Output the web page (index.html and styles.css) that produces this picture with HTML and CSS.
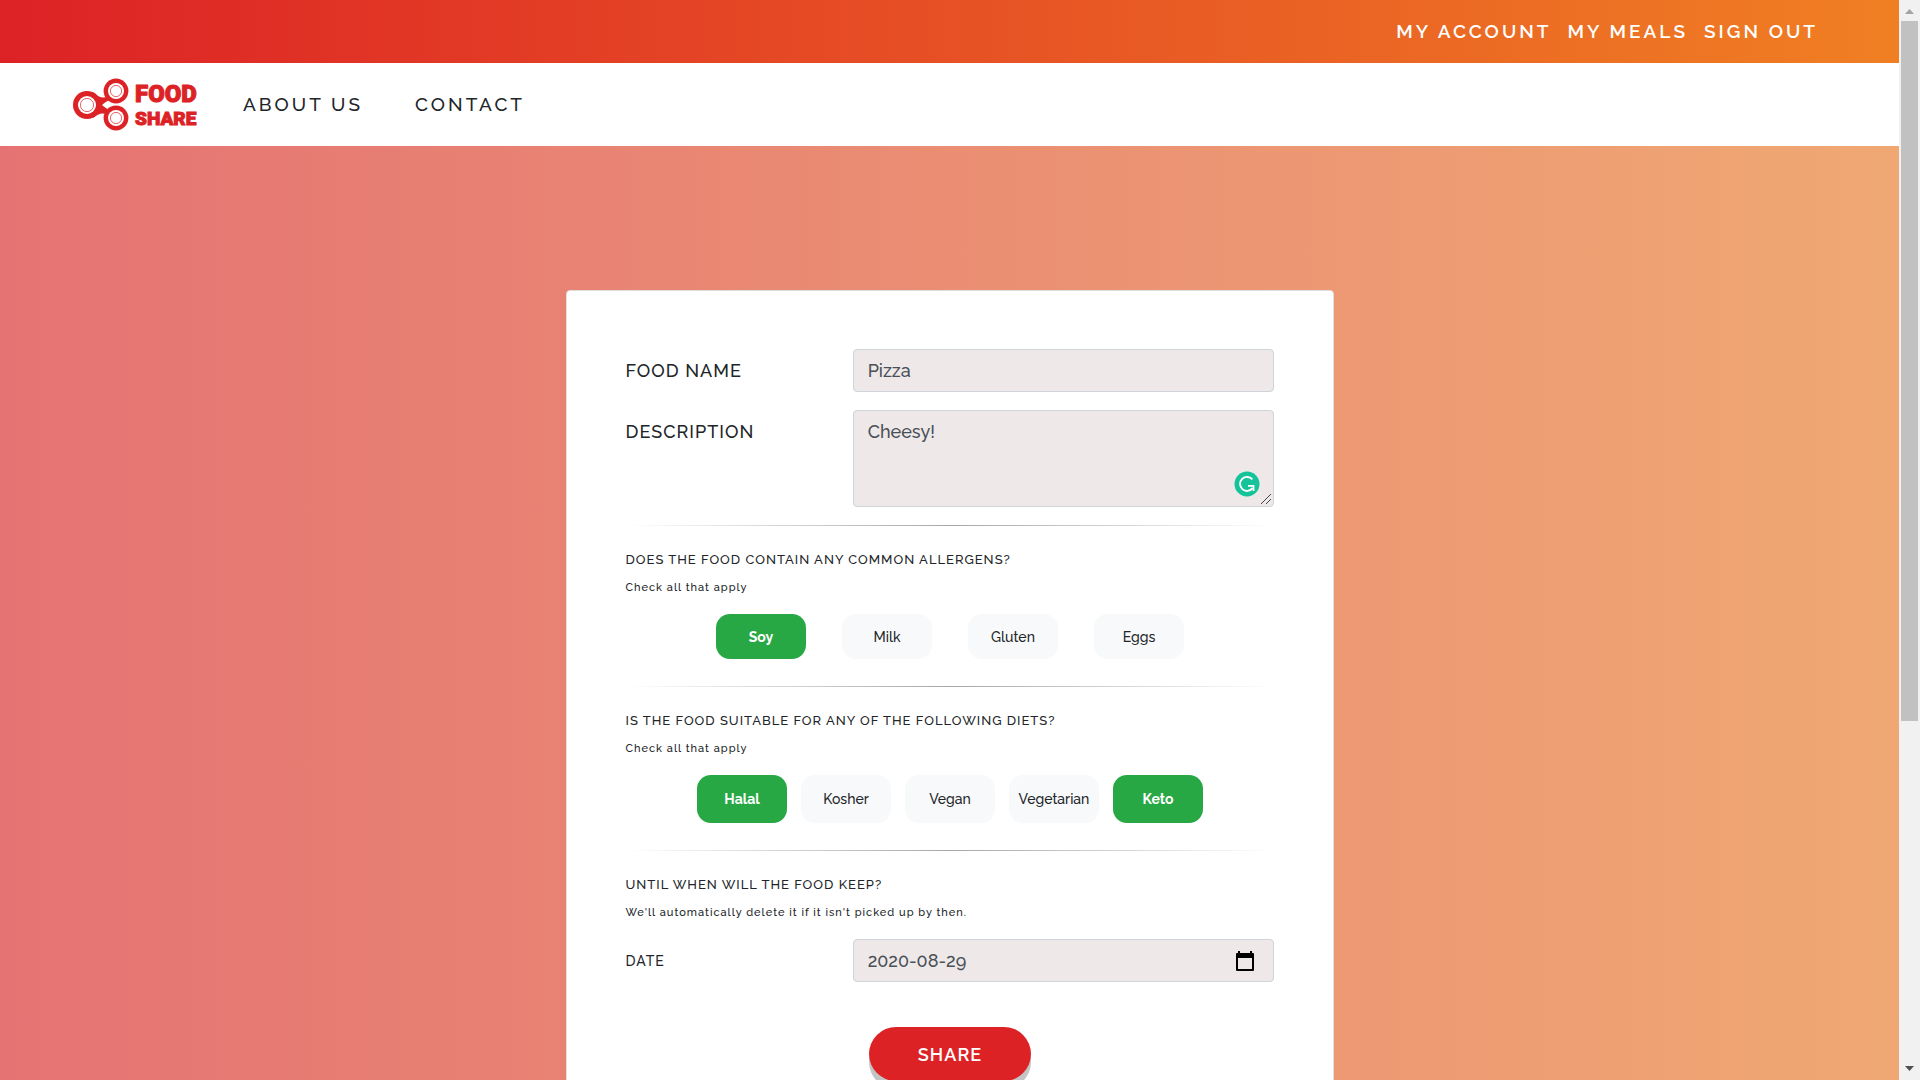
FILE: index.html
```html
<!DOCTYPE html>
<html lang="en">
<head>
    <meta charset="UTF-8">
    <meta name="viewport" content="width=device-width, initial-scale=1.0">
    <title>Food Share</title>
    <link rel="stylesheet" href="styles.css">
</head>
<body>

    <div class="page">
        <nav class="top-bar">
            <a href="#">My Account</a>
            <a href="#">My Meals</a>
            <a href="#">Sign Out</a>
        </nav>

        <nav class="main-nav">
            <a class="logo" href="#" aria-label="Food Share">
                <svg width="130" height="54" viewBox="0 0 130 54">
                    <g fill="#dd2226">
                        <path d="M20 14 Q30 24 38 16 L40 20 Q32 24 29 27 Q32 30 40 34 L38 40 Q30 31 20 40 Z"/>
                        <circle cx="14" cy="27" r="14"/>
                        <circle cx="43" cy="13" r="12.4"/>
                        <circle cx="43" cy="40" r="12.4"/>
                    </g>
                    <g fill="#fff">
                        <circle cx="14" cy="27" r="9"/>
                        <circle cx="43" cy="13" r="8"/>
                        <circle cx="43" cy="40" r="8"/>
                    </g>
                    <g fill="none" stroke="#dd2226" stroke-width=".7">
                        <circle cx="14" cy="27" r="6.6"/>
                        <circle cx="43" cy="13" r="5.6"/>
                        <circle cx="43" cy="40" r="5.6"/>
                    </g>
                    <g class="logo-text">
                        <text x="62" y="24" font-size="24">FOOD</text>
                        <text x="62" y="47" font-size="19">SHARE</text>
                    </g>
                </svg>
            </a>
            <a href="#">About Us</a>
            <a href="#">Contact</a>
        </nav>

        <main>
            <form class="card">
                <div class="form-row">
                    <label for="foodName">Food Name</label>
                    <input class="field" type="text" id="foodName" value="Pizza">
                </div>
                <div class="form-row">
                    <label for="description">Description</label>
                    <div class="field-wrap">
                        <textarea class="field" id="description" spellcheck="false">Cheesy!</textarea>
                        <svg class="checker" width="26" height="26" viewBox="0 0 26 26">
                            <circle cx="13" cy="13" r="12.5" fill="#15c39a"/>
                            <path d="M18.4 8.4 A7 7 0 1 0 18.6 17.2" fill="none" stroke="#fff" stroke-width="1.9"/>
                            <path d="M14 14H20.4V20H18.6V15.8H14Z" fill="#fff"/>
                        </svg>
                        <svg class="grip" width="12" height="12" viewBox="0 0 12 12">
                            <path d="M1 11 L11 1 M6 11 L11 6" stroke="#444" stroke-width="1"/>
                        </svg>
                    </div>
                </div>

                <hr>
                <h2>Does the food contain any common allergens?</h2>
                <p>Check all that apply</p>
                <div class="options allergens">
                    <label class="option"><input type="checkbox" checked><span>Soy</span></label>
                    <label class="option"><input type="checkbox"><span>Milk</span></label>
                    <label class="option"><input type="checkbox"><span>Gluten</span></label>
                    <label class="option"><input type="checkbox"><span>Eggs</span></label>
                </div>

                <hr>
                <h2>Is the food suitable for any of the following diets?</h2>
                <p>Check all that apply</p>
                <div class="options diets">
                    <label class="option"><input type="checkbox" checked><span>Halal</span></label>
                    <label class="option"><input type="checkbox"><span>Kosher</span></label>
                    <label class="option"><input type="checkbox"><span>Vegan</span></label>
                    <label class="option"><input type="checkbox"><span>Vegetarian</span></label>
                    <label class="option"><input type="checkbox" checked><span>Keto</span></label>
                </div>

                <hr>
                <h2>Until when will the food keep?</h2>
                <p>We'll automatically delete it if it isn't picked up by then.</p>
                <div class="form-row">
                    <label class="small-label" for="date">Date</label>
                    <div class="field-wrap">
                        <input class="field" type="text" id="date" value="2020-08-29">
                        <button class="calendar" type="button" aria-label="Pick a date">
                            <svg width="20" height="22" viewBox="0 0 20 22">
                                <path d="M3 1H5V3H15V1H17V3H18Q19 3 19 4V20Q19 21 18 21H2Q1 21 1 20V4Q1 3 2 3H3ZM3 8V19H17V8Z" fill="#000" fill-rule="evenodd"/>
                            </svg>
                        </button>
                    </div>
                </div>

                <button class="share" type="submit">Share</button>
            </form>
        </main>
    </div>

    <div class="scrollbar">
        <svg width="21" height="21" viewBox="0 0 21 21"><path d="M6 14 L10.5 9 L15 14Z" fill="#a3a3a3"/></svg>
        <div class="track"><div class="thumb"></div></div>
        <svg width="21" height="21" viewBox="0 0 21 21"><path d="M6 7 L10.5 12 L15 7Z" fill="#505050"/></svg>
    </div>

</body>
</html>
```

FILE: styles.css
```css
* {
    box-sizing: border-box;
}
body {
    margin: 0;
    display: flex;
    height: 100vh;
    overflow: hidden;
    font-family: Raleway, Lato, sans-serif;
    font-weight: 500;
    color: #212529;
}
.page {
    flex: 1;
    height: 100vh;
    overflow: hidden;
}
a {
    color: inherit;
    text-decoration: none;
    text-transform: uppercase;
    letter-spacing: 3px;
    font-size: 19px;
    line-height: 27px;
}
.top-bar {
    display: flex;
    justify-content: flex-end;
    gap: 16px;
    padding: 18px 81px;
    background: linear-gradient(to right, #dd2226, #f07f23);
    color: #fff;
    font-weight: 600;
}
.main-nav {
    display: flex;
    align-items: center;
    gap: 52px;
    height: 83px;
    padding: 0 73px;
    background: #fff;
}
.logo {
    display: flex;
    margin-right: -12px;
}
.logo-text {
    font-family: Roboto, "Liberation Sans", sans-serif;
    font-weight: 900;
    letter-spacing: 0;
    fill: #dd2226;
    stroke: #dd2226;
    stroke-width: 1px;
}
main {
    padding: 144px 20px;
    background: linear-gradient(to right, #e57373, #f0a873);
}
.card {
    width: 768px;
    margin: 0 auto;
    padding: 58px 58px 58px 59px;
    background: #fff;
    border: 1px solid #dfdfdf;
    border-radius: 4px;
}
.form-row {
    display: grid;
    grid-template-columns: 35% 65%;
    margin-bottom: 18px;
}
.form-row label {
    font-size: 18px;
    line-height: 43px;
    letter-spacing: 1px;
    text-transform: uppercase;
}
.form-row .small-label {
    font-size: 14px;
    line-height: 44px;
}
.field-wrap {
    position: relative;
    display: flex;
}
.field {
    width: 100%;
    height: 43px;
    padding: 7px 14px;
    font: inherit;
    font-size: 18px;
    line-height: 27px;
    font-variant-numeric: oldstyle-nums;
    color: #495057;
    background: #eee8e8;
    border: 1px solid #ced4da;
    border-radius: 4px;
}
textarea.field {
    height: 97px;
    resize: none;
}
.checker {
    position: absolute;
    right: 14px;
    bottom: 10px;
}
.grip {
    position: absolute;
    right: 2px;
    bottom: 2px;
}
.calendar {
    position: absolute;
    right: 19px;
    top: 11px;
    display: flex;
    padding: 0;
    border: none;
    background: none;
}
hr {
    height: 1px;
    margin: 0 0 24px;
    border: none;
    background: linear-gradient(to right, rgba(0, 0, 0, 0), rgba(0, 0, 0, .35), rgba(0, 0, 0, 0));
}
h2 {
    margin: 0 0 10px;
    font-size: 13px;
    line-height: 19px;
    font-weight: 500;
    letter-spacing: 1px;
    text-transform: uppercase;
}
p {
    margin: 0 0 17px;
    font-size: 11px;
    line-height: 18px;
    letter-spacing: 1px;
}
.options {
    display: flex;
    justify-content: center;
    margin-bottom: 27px;
}
.allergens {
    gap: 36px;
    height: 45px;
}
.diets {
    gap: 14px;
    height: 48px;
}
.option {
    display: flex;
    width: 90px;
    font-size: 14px;
}
.option input {
    position: absolute;
    opacity: 0;
}
.option span {
    flex: 1;
    display: flex;
    align-items: center;
    justify-content: center;
    background: #f8f9fa;
    border-radius: 14px;
}
.option input:checked + span {
    background: #28a745;
    color: #fff;
    font-weight: 700;
}
.share {
    display: block;
    width: 162px;
    height: 54px;
    margin: 44px auto 0;
    font: inherit;
    font-size: 18px;
    font-weight: 600;
    letter-spacing: 1px;
    text-transform: uppercase;
    color: #fff;
    background: #dd2226;
    border: none;
    border-radius: 27px;
    box-shadow: 0 8px 0 #c4c4c4;
}
.scrollbar {
    display: flex;
    flex-direction: column;
    width: 21px;
    background: #f1f1f1;
}
.track {
    flex: 1;
    padding: 0 2px;
}
.thumb {
    height: 67.4%;
    background: #c1c1c1;
}
```
